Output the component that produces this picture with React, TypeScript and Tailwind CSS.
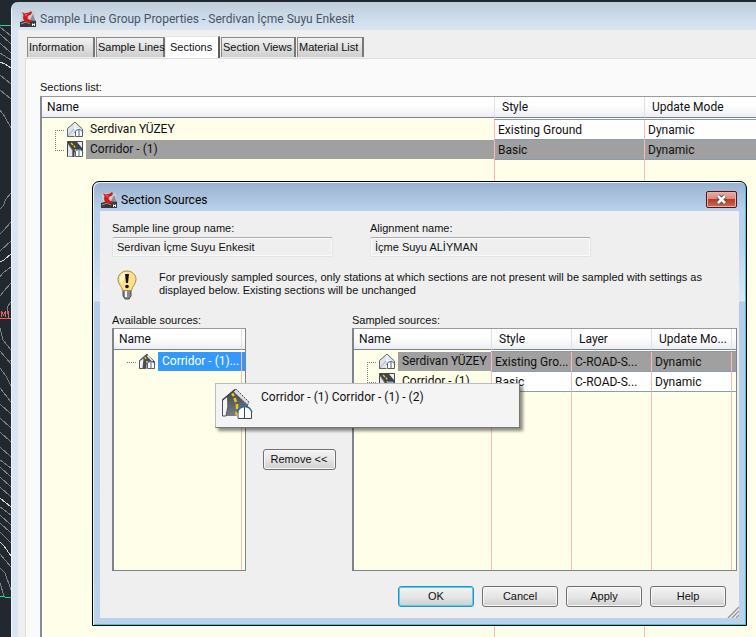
import React from 'react';

type IconKind = 'surface' | 'road' | 'corridor';

interface SourceRow {
  icon: IconKind;
  name: string;
  cells: string[];
  selected?: boolean;
}

interface Column {
  title: string;
  width: string;
}

const MAIN_COLUMNS: Column[] = [
  { title: 'Name', width: 'w-[452px]' },
  { title: 'Style', width: 'w-[150px]' },
  { title: 'Update Mode', width: '' },
];

const MAIN_ROWS: SourceRow[] = [
  { icon: 'surface', name: 'Serdivan YÜZEY', cells: ['Existing Ground', 'Dynamic'] },
  { icon: 'road', name: 'Corridor - (1)', cells: ['Basic', 'Dynamic'], selected: true },
];

const SAMPLED_COLUMNS: Column[] = [
  { title: 'Name', width: 'w-[137px]' },
  { title: 'Style', width: 'w-20' },
  { title: 'Layer', width: 'w-20' },
  { title: 'Update Mo...', width: 'w-20' },
  { title: '', width: '' },
];

const SAMPLED_ROWS: SourceRow[] = [
  { icon: 'surface', name: 'Serdivan YÜZEY', cells: ['Existing Gro...', 'C-ROAD-S...', 'Dynamic', ''], selected: true },
  { icon: 'road', name: 'Corridor - (1)', cells: ['Basic', 'C-ROAD-S...', 'Dynamic', ''] },
];

const CONTOURS = [
  'M0 27L11 36', 'M0 34L11 44', 'M0 43L11 53', 'M0 53L11 60', 'M0 75L11 84', 'M0 90L11 99', 'M0 110L5 117L11 128',
  'M0 209L3 206L6 199L11 193', 'M0 234L4 230L11 222', 'M0 251L11 241', 'M0 277L3 273L11 267', 'M0 296L4 291L11 283',
  'M11 302L8 306L7 314', 'M0 328L3 340L11 350', 'M0 351L11 364', 'M0 368L6 376L11 386', 'M0 388L11 402', 'M0 404L11 414',
  'M0 418L11 428', 'M0 432L11 442', 'M0 447L11 457', 'M0 460L11 468', 'M0 467L11 477', 'M0 477L11 487', 'M0 487L11 497',
  'M0 507L11 515', 'M0 515L11 525', 'M0 523L11 533', 'M0 532L11 543', 'M0 554L11 567', 'M0 568L5 573L11 590', 'M0 583L4 596',
];

const BRIGHT_CONTOURS = ['M0 62L5 64L11 68', 'M0 262L4 260L11 254', 'M0 498L11 507', 'M0 542L4 546L11 556'];

const DrawingCanvas = () => (
  <svg className="w-full h-full" shapeRendering="crispEdges" aria-hidden="true">
    <path d={CONTOURS.join('')} fill="none" stroke="#7c8188" />
    <path d={BRIGHT_CONTOURS.join('')} fill="none" stroke="#d3d6da" />
    <path d="M0 25.5H11M0 596.5H5M5 597.5H11" stroke="#15e07c" />
    <path d="M1.5 317V311L3.5 315L5.5 311V317M8.5 311V318M0 318.5H11M10 360.5h1" fill="none" stroke="#f0605c" />
  </svg>
);

const AppIcon = () => (
  <svg width="16" height="16" viewBox="0 0 16 16" className="shrink-0" aria-hidden="true">
    <path d="M1 1h14l-1 9H1z" fill="#c9cbcd" />
    <path d="M10 9l3-6 2 6z" fill="#8b8e92" />
    <path d="M0 11l5-1.500h11V16H0z" fill="#39393b" />
    <path d="M1 13l5-2 4 2" stroke="#9a9a9b" fill="none" />
    <path d="M2 1L4.500 2.500 9 1.500 11 0l1 1.500-1 2L8 5l-.5 2 2 2 3 .5-1 1.500-4 .5L4 10 3 7l.5-3z" fill="#cf1a20" />
    <path d="M4.500 3.500L8 3 6 5.500z" fill="#f45c58" />
    <path d="M12.500 12.500v2.500M14.500 12.500v2.500M12.500 13.500h2" stroke="#fff" />
  </svg>
);

const SmallHouse = () => (
  <>
    <path d="M7.500 11.500L9.500 9Q12 7.500 14 9L16 11.500V16H7.500z" fill="#fff" />
    <path d="M8.500 11v4.500h7V11M12 9v6.500" fill="none" stroke="#5b6068" />
    <path d="M7.500 11.500Q9 8.500 12 8.500T16 11.500" fill="none" stroke="#2d6fb5" />
  </>
);

const SourceIcon = ({ kind }: { kind: IconKind }) => (
  <svg width="17" height="17" viewBox="0 0 17 17" className="shrink-0" aria-hidden="true">
    {kind === 'surface' && (
      <>
        <path d="M.5 7.500L8 1l7.500 7v7.500H.5z" fill="#dfe2e6" stroke="#5f646b" />
        <path d="M8 2v5M1 15l7-8 7 2" fill="none" stroke="#fff" />
        <path d="M1 15l6-7" stroke="#a0a4aa" />
      </>
    )}
    {kind === 'road' && (
      <>
        <path d="M.5.5h15v15H.5z" fill="#3e4247" stroke="#44484e" />
        <path d="M1 3l4 6v6.500H1z" fill="#e4e6e9" />
        <path d="M10 1h5v6z" fill="#eceef0" />
        <path d="M1 2.500l4.500 6.500v6.500" fill="none" stroke="#7b7f85" />
        <path d="M4 2l2 2M7 4.500l1 2M8.500 8v2" stroke="#f5c518" strokeWidth="1.500" />
      </>
    )}
    {kind === 'corridor' && (
      <>
        <path d="M.5 7.500L8 1l7.500 7.500v7H.5z" fill="#4b4f55" stroke="#54585e" />
        <path d="M1 8l3.500-2.500L3.500 15H1z" fill="#f1f2f3" />
        <path d="M9 1.500L14.500 8 12.500 8 8 3.500z" fill="#e2e4e7" />
        <path d="M6 4l1 2M8 8v2" stroke="#f5c518" strokeWidth="1.500" />
      </>
    )}
    <SmallHouse />
  </svg>
);

const CorridorLargeIcon = () => (
  <svg width="32" height="32" viewBox="0 0 32 32" className="shrink-0" aria-hidden="true">
    <defs>
      <linearGradient id="asphalt" x1="0" x2="0" y1="0" y2="1">
        <stop offset="0" stopColor="#3f444c" />
        <stop offset="1" stopColor="#787e86" />
      </linearGradient>
    </defs>
    <path d="M1.500 12L14 1.500 27 14.500V28H1.500z" fill="url(#asphalt)" />
    <path d="M1.500 12L6.500 8Q8 19 5 28H1.500z" fill="#f3f4f5" stroke="#4c5158" />
    <path d="M12 3.500L15 1 28 14l-1.500 3z" fill="#d5d8dc" stroke="#4c5158" strokeDasharray="2 1" />
    <path d="M1.500 12L14 1.500" stroke="#3c4148" strokeWidth="1.500" />
    <path d="M11 5.500l2 2.500M13.500 10l1.500 4M16 16v5M15.500 23.500v4" stroke="#f7c600" strokeWidth="2.500" fill="none" />
    <path d="M16 24Q23 14 31 24V31H16z" fill="#fff" />
    <path d="M17 23v7.500h13.500V23M23.500 19v11.500" fill="none" stroke="#43474d" />
    <path d="M16 24.500Q18 19 23.500 18.500T31 24.500" fill="none" stroke="#2468ad" strokeWidth="1.500" />
  </svg>
);

const BulbIcon = () => (
  <svg width="20" height="30" viewBox="0 0 20 30" className="shrink-0" aria-hidden="true">
    <path d="M6 20h8v6l-2 3H8l-2-3z" fill="#85898d" stroke="#4c4c4c" />
    <path d="M9 21v6" stroke="#f4f4f4" strokeWidth="2" />
    <path d="M10 1C4.500 1 1 5 1 9.500c0 5 4 6.500 4.500 11h9C15 16 19 14.500 19 9.500 19 5 15.500 1 10 1z" fill="#ffe08a" stroke="#a8884e" />
    <path d="M10 2.500C6 2.500 3 5 3 9c0 2 1 3.500 2 5l4-10z" fill="#fff4cd" />
    <path d="M8 4h4l-1 9H9z" fill="#111" />
    <circle cx="10" cy="16.500" r="1.800" fill="#111" />
  </svg>
);

const TreeLines = ({ index, count }: { index: number; count: number }) => (
  <svg width="11" height="20" className="shrink-0 ml-[13px] mr-px" shapeRendering="crispEdges" aria-hidden="true">
    <path d="M0 10.500H10" stroke="#808080" strokeDasharray="1 1" />
    {index < count - 1 && <path d="M.5 10V20" stroke="#808080" strokeDasharray="1 1" />}
    {index > 0 && <path d="M.5 0V10" stroke="#808080" strokeDasharray="1 1" />}
  </svg>
);

const ListHead = ({ columns }: { columns: Column[] }) => (
  <thead>
    <tr>
      {columns.map((col, i) => (
        <th key={i} className={`${col.width} h-[21px] p-0 border-b border-b-[#7e838d] bg-linear-to-b from-white from-40% to-[#eceef1] text-left font-normal whitespace-nowrap overflow-hidden ${i > 0 ? 'border-l border-l-[#dfe1e4]' : ''} ${col.title ? (i > 0 ? 'pl-[7px]' : 'pl-[5px]') : ''}`}>
          {col.title}
        </th>
      ))}
    </tr>
  </thead>
);

const NameCell = ({ row, index, count, highlight }: { row: SourceRow; index: number; count: number; highlight: string }) => (
  <td className="h-5 p-0 pb-px">
    <div className="flex items-center h-[19px]">
      <TreeLines index={index} count={count} />
      <SourceIcon kind={row.icon} />
      <span className={`flex-1 ml-0.5 pl-1 h-[19px] leading-[19px] whitespace-nowrap ${highlight}`}>{row.name}</span>
    </div>
  </td>
);

const SourceTable = ({ columns, rows }: { columns: Column[]; rows: SourceRow[] }) => (
  <table className="w-full h-full table-fixed border-separate border-spacing-0 text-[12px] leading-4 text-[#101010]">
    <ListHead columns={columns} />
    <tbody>
      <tr>
        {columns.map((_, i) => (
          <td key={i} className={`h-0.5 p-0 border-b ${i > 0 ? 'border-b-[#869db8]' : 'border-b-transparent'}`} />
        ))}
      </tr>
      {rows.map((row, r) => (
        <tr key={r}>
          <NameCell row={row} index={r} count={rows.length} highlight={row.selected ? 'bg-[#a0a0a0]' : ''} />
          {row.cells.map((cell, c) => (
            <td key={c} className={`h-5 p-0 border-l border-l-[#ffb9b9] border-b border-b-[#869db8] whitespace-nowrap overflow-hidden ${cell ? 'pl-[3px]' : ''} ${row.selected ? 'bg-[#a0a0a0]' : cell ? 'bg-white' : ''}`}>
              {cell}
            </td>
          ))}
        </tr>
      ))}
      <tr>
        {columns.map((_, i) => (
          <td key={i} className={`p-0 ${i > 0 ? 'border-l border-l-[#ffb9b9]' : ''}`} />
        ))}
      </tr>
    </tbody>
  </table>
);

const AVAILABLE_ROW: SourceRow = { icon: 'corridor', name: 'Corridor - (1)...', cells: [], selected: true };

const AvailableList = () => (
  <table className="w-full h-full table-fixed border-separate border-spacing-0 text-[12px] leading-4 text-[#101010]">
    <ListHead columns={[{ title: 'Name', width: '' }, { title: '', width: 'w-1' }]} />
    <tbody>
      <tr><td className="h-0.5 p-0" /><td className="p-0" /></tr>
      <tr>
        <NameCell row={AVAILABLE_ROW} index={0} count={1} highlight="bg-[#3399ff] text-white" />
        <td className="p-0 pb-px border-l border-l-[#ffb9b9]"><div className="h-[19px] bg-[#3399ff]" /></td>
      </tr>
      <tr><td className="p-0" /><td className="p-0 border-l border-l-[#ffb9b9]" /></tr>
    </tbody>
  </table>
);

const TABS = ['Information', 'Sample Lines', 'Sections', 'Section Views', 'Material List'];

const TAB_WIDTHS = ['w-[68px]', 'w-[69px]', 'w-[54px]', 'w-[75px]', 'w-[67px]'];

const TabBar = () => (
  <div role="tablist" className="flex items-end h-[22px] pl-0.5 gap-px">
    {TABS.map((tab, i) => {
      const active = tab === 'Sections';
      return (
        <button
          key={tab}
          role="tab"
          aria-selected={active}
          className={`${TAB_WIDTHS[i]} shrink-0 whitespace-nowrap text-left border-r-2 ${active ? 'h-[22px] pl-1 bg-white border-t border-t-[#e4e4e4] border-r-[#5c5c5c]' : 'h-5 mb-px pl-px bg-linear-to-b from-[#f2f2f2] to-[#cfcfcf] border-t border-l border-t-[#8a8a8a] border-l-[#8a8a8a] border-r-[#777777]'}`}
        >
          {tab}
        </button>
      );
    })}
  </div>
);

const DialogButton = ({ label, isDefault }: { label: string; isDefault?: boolean }) => (
  <button
    className={`w-[76px] h-[21px] rounded-[3px] border bg-linear-to-b from-[#f3f3f3] via-[#e6e6e6] to-[#cfcfcf] ${isDefault ? 'border-[#2f8fc0] shadow-[inset_0_0_0_1px_#4fd0f7]' : 'border-[#707070] shadow-[inset_0_0_0_1px_#f8f8f8]'}`}
  >
    {label}
  </button>
);

const NameField = ({ id, label, value }: { id: string; label: string; value: string }) => (
  <div className="w-[221px]">
    <label htmlFor={id} className="block h-3.5 leading-3.5">{label}</label>
    <input id={id} readOnly defaultValue={value} className="block w-full h-5 mt-0.5 px-1 bg-[#efefef] rounded-xs border border-[#e0e4ea] border-t-[#abadb3] shadow-[inset_0_0_0_1px_#fafafa] outline-none" />
  </div>
);

const Tooltip = () => (
  <div role="tooltip" className="absolute left-[122px] top-[201px] w-[305px] h-[45px] flex pl-[5px] pt-1 bg-[#f4f4f4] border border-[#bdbdbd] border-r-[#767676] border-b-[#767676] shadow-[3px_3px_3px_rgba(0,0,0,0.45)] font-['Roboto',sans-serif] text-[12px] text-[#101010]">
    <CorridorLargeIcon />
    <span className="ml-2 leading-[18px]">Corridor - (1) Corridor - (1) - (2)</span>
  </div>
);

const SectionSourcesDialog = () => (
  <div
    role="dialog"
    aria-label="Section Sources"
    className="absolute left-[80px] right-[9px] top-[179px] border border-black rounded-t-[7px] bg-[linear-gradient(to_bottom,#98b1cf_0px,#b9d1ea_28px,#bad2eb_60px,#dbe8f6_119px,#b5cde8_120px,#bad2ea_100%)] shadow-[inset_1px_1px_0_#e9f3fb,inset_-1px_-1px_0_#35c5dc]"
  >
    <div className="flex items-center h-[29px] pl-2 pr-[9px] pt-1.5">
      <AppIcon />
      <span className="ml-1 font-['Roboto',sans-serif] text-[12px] text-black">Section Sources</span>
      <button aria-label="Close" className="ml-auto w-[31px] h-[17px] rounded-xs border border-[#4a1620] bg-[linear-gradient(to_bottom,#e8aba0_0%,#d9897c_48%,#b83a24_50%,#cf6a55_100%)] shadow-[inset_0_0_0_1px_#eab3a8] flex items-center justify-center">
        <svg width="13" height="11" viewBox="0 0 13 11" aria-hidden="true">
          <path d="M3 2l7 7M10 2L3 9" stroke="#4a4f5c" strokeWidth="4.500" />
          <path d="M3 2l7 7M10 2L3 9" stroke="#fff" strokeWidth="2.500" />
        </svg>
      </button>
    </div>

    <div className="relative mx-[7px] mb-[7px] pl-3 pr-0.5 pt-2.5 pb-[11px] bg-[#efefef]">
      <div className="flex gap-[37px]">
        <NameField id="group-name" label="Sample line group name:" value="Serdivan İçme Suyu Enkesit" />
        <NameField id="alignment-name" label="Alignment name:" value="İçme Suyu ALİYMAN" />
      </div>

      <div className="flex mt-[13px] h-[30px] pl-[5px]">
        <BulbIcon />
        <p className="ml-[22px] pt-px w-[550px] leading-[13px]">
          For previously sampled sources, only stations at which sections are not present will be sampled with settings as<br />
          displayed below. Existing sections will be unchanged
        </p>
      </div>

      <div className="flex mt-[13px]">
        <div className="w-[134px]">
          <div className="h-[15px] leading-3.5">Available sources:</div>
          <div className="h-[243px] border border-[#7e838d] border-l-2 border-t-[#9a9a9a] bg-[#ffffe9]">
            <AvailableList />
          </div>
        </div>
        <div className="w-[106px] flex justify-center pt-[136px]">
          <button className="w-[73px] h-[21px] rounded-[3px] border border-[#707070] shadow-[inset_0_0_0_1px_#f8f8f8] bg-linear-to-b from-[#f3f3f3] via-[#e6e6e6] to-[#cfcfcf]">Remove &lt;&lt;</button>
        </div>
        <div className="flex-1">
          <div className="h-[15px] leading-3.5">Sampled sources:</div>
          <div className="h-[243px] border border-[#7e838d] border-l-2 border-t-[#9a9a9a] bg-[#ffffe9]">
            <SourceTable columns={SAMPLED_COLUMNS} rows={SAMPLED_ROWS} />
          </div>
        </div>
      </div>

      <div className="flex justify-end gap-2 mt-[15px] pr-[11px]">
        <DialogButton label="OK" isDefault />
        <DialogButton label="Cancel" />
        <DialogButton label="Apply" />
        <DialogButton label="Help" />
      </div>

      <svg width="12" height="12" className="absolute right-0 bottom-0" aria-hidden="true">
        <path d="M1 12L12 1M5 12L12 5M9 12L12 9" stroke="#9a9a9a" strokeWidth="1.500" />
      </svg>
    </div>
    <Tooltip />
  </div>
);

const App: React.FC = () => {
  return (
    <div className="flex min-h-screen bg-[#212830] overflow-hidden font-['Liberation_Sans',sans-serif] text-[11px] text-[#101010] [&_table]:font-['Roboto',sans-serif]">
      <div className="w-[11px] shrink-0">
        <DrawingCanvas />
      </div>
      <div className="relative flex-1 min-w-0 flex flex-col mt-0.5 pl-[7px] rounded-tl-[7px] border-l border-l-[#f2f7fb] bg-[linear-gradient(to_bottom,#bfcddb_0px,#d9e6f2_28px,#d9e6f2_100%)]">
        <div className="flex items-center h-7 pl-px pt-1.5 font-['Roboto',sans-serif] text-[12px] text-[#4a5564]">
          <AppIcon />
          <span className="ml-1">Sample Line Group Properties - Serdivan İçme Suyu Enkesit</span>
        </div>
        <div className="flex-1 flex flex-col pt-1.5 pl-[7px] -ml-px bg-[#efefef]">
          <TabBar />
          <div className="flex-1 flex flex-col pt-5 pl-3.5 border-l border-t border-[#dedede] bg-[#fafafa]">
            <div className="h-[17px] leading-4">Sections list:</div>
            <div className="flex-1 grid border-t border-l-2 border-t-[#9a9a9a] border-l-[#868a94] bg-[#ffffe9]">
              <SourceTable columns={MAIN_COLUMNS} rows={MAIN_ROWS} />
            </div>
          </div>
        </div>
        <SectionSourcesDialog />
      </div>
    </div>
  );
};

export default App;
